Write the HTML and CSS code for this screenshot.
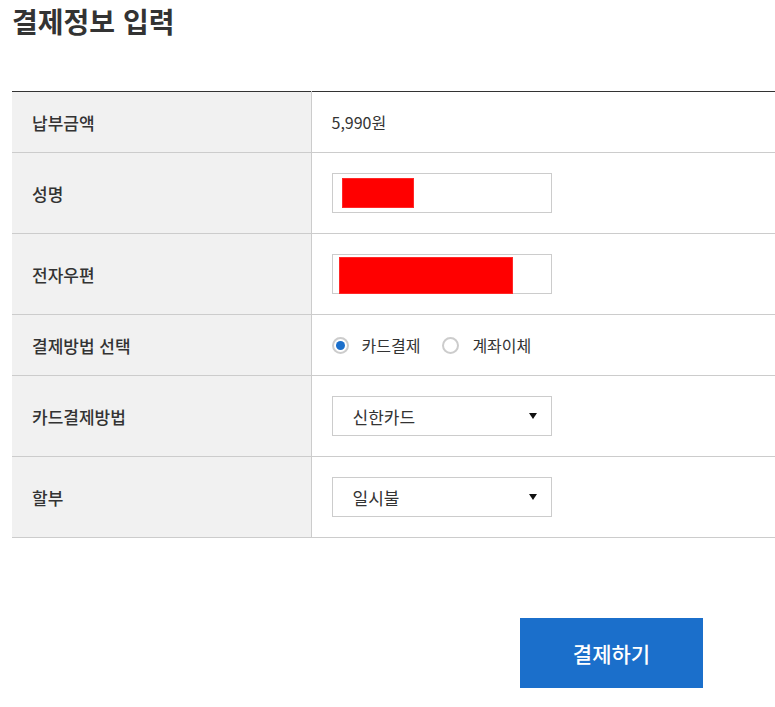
FILE: index.html
```html
<!DOCTYPE html>
<html lang="ko">
<head>
<meta charset="utf-8">
<link rel="stylesheet" href="styles.css">
</head>
<body>
<div class="page">
  <h1 class="title">결제정보 입력</h1>
  <table class="form-table">
    <tr class="row-short">
      <th>납부금액</th>
      <td>5,990원</td>
    </tr>
    <tr class="row-tall">
      <th>성명</th>
      <td><div class="input input-name"><span class="mask"></span></div></td>
    </tr>
    <tr class="row-tall">
      <th>전자우편</th>
      <td><div class="input input-email"><span class="mask"></span></div></td>
    </tr>
    <tr class="row-short">
      <th>결제방법 선택</th>
      <td>
        <div class="radios">
          <label class="radio"><span class="dot checked"></span>카드결제</label>
          <label class="radio"><span class="dot"></span>계좌이체</label>
        </div>
      </td>
    </tr>
    <tr class="row-tall">
      <th>카드결제방법</th>
      <td><div class="select"><span>신한카드</span><span class="caret"></span></div></td>
    </tr>
    <tr class="row-tall">
      <th>할부</th>
      <td><div class="select"><span>일시불</span><span class="caret"></span></div></td>
    </tr>
  </table>
  <div class="actions">
    <button class="pay-btn">결제하기</button>
  </div>
</div>
</body>
</html>
```
FILE: styles.css
```css
* { box-sizing: border-box; }
html, body { margin: 0; padding: 0; background: #fff; }
body {
  font-family: "Noto Sans CJK KR", "Noto Sans", sans-serif;
  color: #333;
}
.page {
  padding: 0 0 0 12px;
}
.title {
  margin: 0;
  padding-top: 1px;
  font-size: 28px;
  line-height: 40px;
  font-weight: 700;
  color: #333;
  letter-spacing: 0;
}
.form-table {
  margin-top: 50px;
  width: 763px;
  border-collapse: collapse;
  border-top: 1px solid #333;
}
.form-table th,
.form-table td {
  border-bottom: 1px solid #ccc;
  padding: 0 20px;
  vertical-align: middle;
}
.form-table th {
  width: 299px;
  background: #f1f1f1;
  text-align: left;
  font-size: 17px;
  font-weight: 500;
  color: #333;
  border-right: 1px solid #ccc;
}
.form-table td {
  font-size: 16px;
  color: #333;
}
.row-short { height: 61px; }
.row-tall { height: 81px; }
.input {
  width: 220px;
  height: 40px;
  border: 1px solid #ccc;
  background: #fff;
  display: flex;
  align-items: center;
}
.mask {
  display: block;
  background: #ff0000;
  box-shadow: 0 0 0 1px rgba(255, 80, 80, 0.5) inset;
}
.input-name .mask {
  width: 72px;
  height: 30px;
  margin-left: 9px;
}
.input-email .mask {
  width: 174px;
  height: 37px;
  margin-left: 6px;
  margin-top: 3px;
}
.radios {
  display: flex;
  align-items: center;
  gap: 22px;
}
.radio {
  display: flex;
  align-items: center;
  gap: 13px;
  font-size: 16px;
  color: #333;
}
.dot {
  width: 17px;
  height: 17px;
  border: 2px solid #ccc;
  border-radius: 50%;
  display: flex;
  align-items: center;
  justify-content: center;
  background: #fff;
}
.dot.checked::after {
  content: "";
  width: 9px;
  height: 9px;
  border-radius: 50%;
  background: #1b6fcb;
}
.select {
  width: 220px;
  height: 40px;
  border: 1px solid #ccc;
  display: flex;
  align-items: center;
  justify-content: space-between;
  padding: 0 14px 0 20px;
  font-size: 17px;
  color: #333;
}
.caret {
  width: 0;
  height: 0;
  border-left: 4px solid transparent;
  border-right: 4px solid transparent;
  border-top: 6px solid #111;
}
.actions {
  display: flex;
  justify-content: flex-end;
  padding-right: 72px;
  margin-top: 80px;
}
.pay-btn {
  width: 183px;
  height: 70px;
  border: 0;
  background: #1b6fcb;
  color: #fff;
  font-family: "Noto Sans CJK KR", "Noto Sans", sans-serif;
  font-size: 21px;
  font-weight: 500;
}
```
